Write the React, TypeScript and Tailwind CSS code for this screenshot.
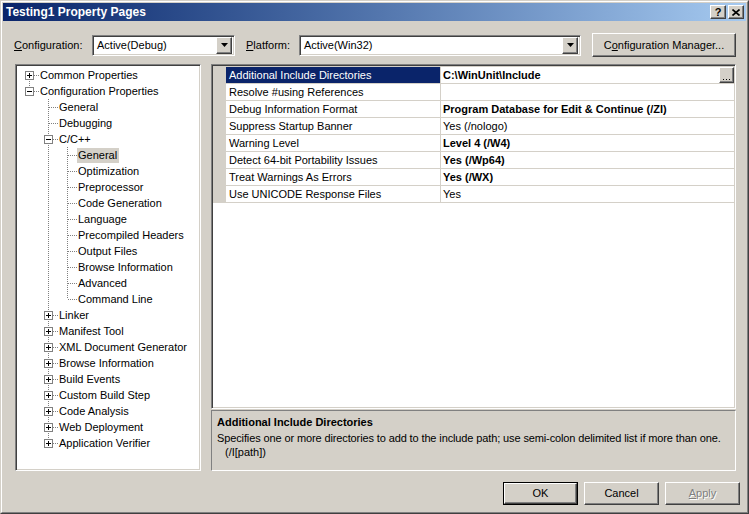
import type { ReactNode } from "react";

const sunken =
  "border border-t-[#808080] border-l-[#808080] border-r-white border-b-white shadow-[inset_1px_1px_0_#404040,inset_-1px_-1px_0_#d4d0c8]";
const raised =
  "border border-t-white border-l-white border-r-[#404040] border-b-[#404040] shadow-[inset_-1px_-1px_0_#808080]";

type TreeRow = {
  label: string;
  level: number;
  exp?: "+" | "-";
  top: boolean;
  bot: boolean;
  anc: boolean[];
  sel?: boolean;
};

const cppKids = [
  "General",
  "Optimization",
  "Preprocessor",
  "Code Generation",
  "Language",
  "Precompiled Headers",
  "Output Files",
  "Browse Information",
  "Advanced",
  "Command Line",
];

const moreKids = [
  "Linker",
  "Manifest Tool",
  "XML Document Generator",
  "Browse Information",
  "Build Events",
  "Custom Build Step",
  "Code Analysis",
  "Web Deployment",
  "Application Verifier",
];

const tree: TreeRow[] = [
  { label: "Common Properties", level: 0, exp: "+", top: false, bot: true, anc: [] },
  { label: "Configuration Properties", level: 0, exp: "-", top: true, bot: false, anc: [] },
  { label: "General", level: 1, top: true, bot: true, anc: [false] },
  { label: "Debugging", level: 1, top: true, bot: true, anc: [false] },
  { label: "C/C++", level: 1, exp: "-", top: true, bot: true, anc: [false] },
  ...cppKids.map((label, i) => ({
    label,
    level: 2,
    top: true,
    bot: i < cppKids.length - 1,
    anc: [false, true],
    sel: i === 0,
  })),
  ...moreKids.map((label, i) => ({
    label,
    level: 1,
    exp: "+" as const,
    top: true,
    bot: i < moreKids.length - 1,
    anc: [false],
  })),
];

const props = [
  { name: "Additional Include Directories", value: "C:\\WinUnit\\Include", bold: true, sel: true },
  { name: "Resolve #using References", value: "", bold: false },
  { name: "Debug Information Format", value: "Program Database for Edit & Continue (/ZI)", bold: true },
  { name: "Suppress Startup Banner", value: "Yes (/nologo)", bold: false },
  { name: "Warning Level", value: "Level 4 (/W4)", bold: true },
  { name: "Detect 64-bit Portability Issues", value: "Yes (/Wp64)", bold: true },
  { name: "Treat Warnings As Errors", value: "Yes (/WX)", bold: true },
  { name: "Use UNICODE Response Files", value: "Yes", bold: false },
];

function LineCell({ full }: { full: boolean }) {
  return (
    <svg width="19" height="16" className="shrink-0">
      {full && <line x1="9.5" y1="0" x2="9.5" y2="16" stroke="#808080" strokeDasharray="1 1" />}
    </svg>
  );
}

function ConnCell({ row }: { row: TreeRow }) {
  return (
    <svg width="19" height="16" className="shrink-0">
      {row.top && <line x1="9.5" y1="0" x2="9.5" y2="8" stroke="#808080" strokeDasharray="1 1" />}
      {row.bot && <line x1="9.5" y1="8" x2="9.5" y2="16" stroke="#808080" strokeDasharray="1 1" />}
      <line x1="10" y1="8.5" x2="19" y2="8.5" stroke="#808080" strokeDasharray="1 1" />
      {row.exp && (
        <>
          <rect x="5.5" y="4.5" width="8" height="8" fill="#fff" stroke="#808080" />
          <line x1="7" y1="8.5" x2="12" y2="8.5" stroke="#000" />
          {row.exp === "+" && <line x1="9.5" y1="6" x2="9.5" y2="11" stroke="#000" />}
        </>
      )}
    </svg>
  );
}

function Btn({ children, w, def }: { children: ReactNode; w: string; def?: boolean }) {
  if (def) {
    return (
      <div className={`${w} h-[23px] border border-black`}>
        <div className={`${raised} h-full flex items-center justify-center`}>{children}</div>
      </div>
    );
  }
  return <div className={`${raised} ${w} h-[23px] flex items-center justify-center`}>{children}</div>;
}

function Combo({ w, text }: { w: string; text: string }) {
  return (
    <div className={`${sunken} ${w} h-[21px] bg-white flex items-center p-[2px]`}>
      <span className="flex-1 pl-[2px]">{text}</span>
      <div className={`${raised} w-[16px] h-[17px] bg-[#d4d0c8] flex items-center justify-center`}>
        <svg width="7" height="4">
          <path d="M0 0h7L3.5 4z" fill="#000" />
        </svg>
      </div>
    </div>
  );
}

export default function App() {
  return (
    <div className="w-[749px] h-[514px] bg-[#d4d0c8] font-['Liberation_Sans',Arial,sans-serif] text-[11px] text-black border border-t-[#d4d0c8] border-l-[#d4d0c8] border-r-[#404040] border-b-[#404040] overflow-hidden">
      <div className="h-full border border-t-white border-l-white border-r-[#808080] border-b-[#808080] p-px flex flex-col">
        {/* title bar */}
        <div className="h-[18px] bg-gradient-to-r from-[#0a246a] to-[#a6caf0] flex items-center pl-[3px] pr-[2px]">
          <span className="flex-1 text-white font-bold text-[12px] leading-none">Testing1 Property Pages</span>
          <div className={`${raised} bg-[#d4d0c8] w-[16px] h-[14px] flex items-center justify-center font-bold text-[11px] leading-none`}>
            ?
          </div>
          <div className={`${raised} bg-[#d4d0c8] w-[16px] h-[14px] ml-[2px] flex items-center justify-center`}>
            <svg width="8" height="7">
              <path d="M0.5 0.5L7.5 6.5M7.5 0.5L0.5 6.5" stroke="#000" strokeWidth="1.6" />
            </svg>
          </div>
        </div>

        {/* configuration row */}
        <div className="mt-[12px] h-[24px] flex items-center pl-[11px]">
          <span className="w-[78px]">
            <span className="underline">C</span>onfiguration:
          </span>
          <Combo w="w-[143px]" text="Active(Debug)" />
          <span className="w-[53px] ml-[11px]">
            <span className="underline">P</span>latform:
          </span>
          <Combo w="w-[282px]" text="Active(Win32)" />
          <div className="ml-[11px]">
            <Btn w="w-[144px] h-[24px]">
              <span>
                C<span className="underline">o</span>nfiguration Manager...
              </span>
            </Btn>
          </div>
        </div>

        {/* panels */}
        <div className="mt-[7px] flex pl-[12px] h-[407px]">
          <div className={`${sunken} w-[186px] h-full bg-white p-[2px] pl-[4px]`}>
            {tree.map((r, i) => (
              <div key={i} className="h-[16px] flex items-center">
                {r.anc.map((a, k) => (
                  <LineCell key={k} full={a} />
                ))}
                <ConnCell row={r} />
                <span
                  className={`leading-[15px] pl-px pr-[2px] whitespace-nowrap ${r.sel ? "bg-[#d4d0c8]" : ""}`}
                >
                  {r.label}
                </span>
              </div>
            ))}
          </div>

          <div className="ml-[10px] w-[525px] h-full flex flex-col">
            <div className={`${sunken} h-[345px] bg-white p-px`}>
              <div className="border-t border-[#d4d0c8]">
                {props.map((p, i) => (
                  <div key={i} className="h-[17px] flex border-b border-[#d4d0c8]">
                    <div className="w-[13px] bg-[#d4d0c8]" />
                    <div
                      className={`w-[214px] pl-[3px] leading-[16px] whitespace-nowrap ${
                        p.sel ? "bg-[#0a246a] text-white" : ""
                      }`}
                    >
                      {p.name}
                    </div>
                    <div className="w-px bg-[#d4d0c8]" />
                    <div className={`flex-1 flex pl-[2px] leading-[16px] whitespace-nowrap ${p.bold ? "font-bold" : ""}`}>
                      <span className="flex-1">{p.value}</span>
                      {p.sel && (
                        <div className={`${raised} bg-[#d4d0c8] w-[15px] h-[16px] flex items-end justify-center pb-[1px]`}>
                          <svg width="7" height="2">
                            <path d="M0 0h1v1H0zM3 0h1v1H3zM6 0h1v1H6z" fill="#000" />
                          </svg>
                        </div>
                      )}
                    </div>
                  </div>
                ))}
              </div>
            </div>
            <div className="flex-1 mt-[1px] border border-t-[#808080] border-l-[#808080] border-r-white border-b-white pl-[5px] pt-[4px]">
              <div className="font-bold leading-[14px]">Additional Include Directories</div>
              <div className="leading-[14px] mt-[2px] tracking-[-0.12px]">
                Specifies one or more directories to add to the include path; use semi-colon delimited list if more
                than one.
              </div>
              <div className="leading-[14px] pl-[8px]">(/I[path])</div>
            </div>
          </div>
        </div>

        {/* buttons */}
        <div className="mt-[11px] flex justify-end gap-[6px] pr-[6px]">
          <Btn w="w-[75px]" def>
            OK
          </Btn>
          <Btn w="w-[75px]">Cancel</Btn>
          <Btn w="w-[75px]">
            <span className="text-[#808080] [text-shadow:1px_1px_0_#fff]">
              <span className="underline">A</span>pply
            </span>
          </Btn>
        </div>
      </div>
    </div>
  );
}
